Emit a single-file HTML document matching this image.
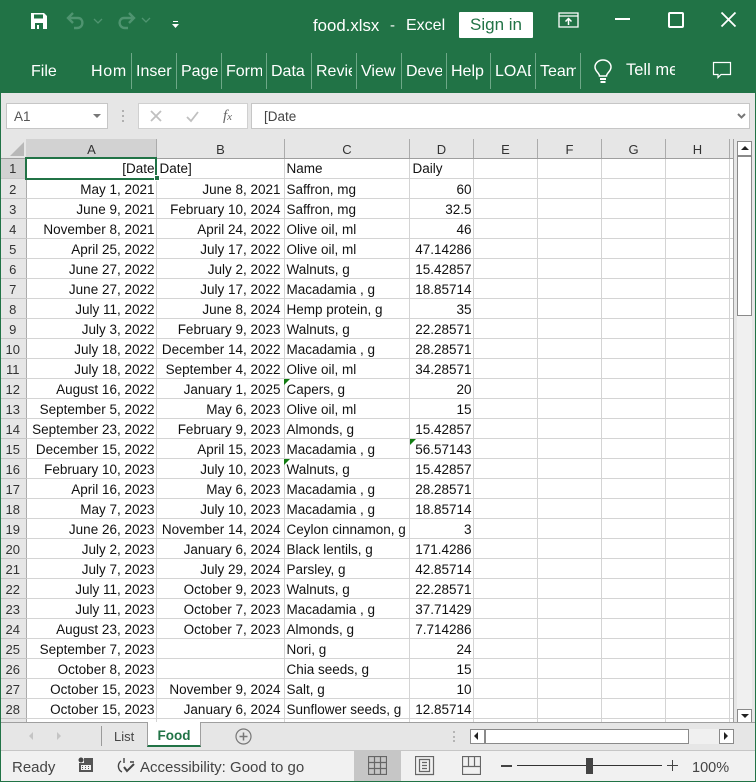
<!DOCTYPE html>
<html><head><meta charset="utf-8"><title>food.xlsx - Excel</title>
<style>
html,body{margin:0;padding:0}
body{width:756px;height:782px;position:relative;overflow:hidden;background:#e6e6e6;font-family:"Liberation Sans",sans-serif}
.a{position:absolute;white-space:nowrap}
.t{position:absolute;top:62px;color:#fff;font-size:16px;line-height:20px;overflow:hidden;white-space:nowrap;height:22px}
.s{position:absolute;top:53px;width:1px;height:36px;background:#6ea888}
.h{position:absolute;top:139px;height:19px;font-size:13px;line-height:21px;text-align:center;color:#333;border-right:1px solid #ababab;box-sizing:border-box}
table{position:absolute;left:0;top:158px;border-collapse:collapse;table-layout:fixed;width:733px;font-size:13.5px;color:#111;background:#fff}
td{height:17px;padding:2px 2px 0;border-right:1px solid #d4d4d4;border-bottom:1px solid #d4d4d4;white-space:nowrap;overflow:hidden;line-height:17px;box-sizing:content-box}
tr{height:20px}
td:first-child{background:#e6e6e6;border-right:1px solid #ababab;border-bottom:1px solid #c6c6c6;text-align:center;font-size:13px;color:#333;padding:2px 0 0}
td:nth-child(2),td:nth-child(3),td:nth-child(5){text-align:right}
td:nth-child(2),td:nth-child(5){padding-right:1px}
td:nth-child(3){padding-right:3px}
td:nth-child(3),td:nth-child(5){padding-left:3px}
.tri{position:absolute;width:0;height:0;border-top:6px solid #107c10;border-right:6px solid transparent}
</style></head><body>
<div class="a" style="left:0;top:0;width:756px;height:93px;background:#217346"></div>
<svg class="a" style="left:30px;top:12px" width="18" height="18" viewBox="0 0 18 18"><path d="M1 1h13l3 3v13H1z" fill="#fff"/><path d="M4 2.500h9v4H4z" fill="#217346"/><path d="M5 11h8v6H5z" fill="#217346"/><path d="M7 13h2v4H7z" fill="#fff"/></svg>
<svg class="a" style="left:65px;top:12px" width="90" height="20" viewBox="0 0 90 20" fill="none" stroke="#4f9470" stroke-width="2.400"><path d="M3 6h10c6 0 6 10-1 10H9M8 1L3 6l5 5"/><path d="M29 7l4 4 4-4" stroke-width="1.300"/><path d="M69 6H59c-6 0-6 10 1 10h3M64 1l5 5-5 5"/><path d="M77 6l4 4 4-4" stroke-width="1.300"/></svg>
<svg class="a" style="left:172px;top:21px" width="7" height="8" viewBox="0 0 7 8"><path d="M1 .5h5" stroke="#fff" fill="none"/><path d="M0 3h7L3.500 7z" fill="#fff"/></svg>
<div class="a" style="left:313px;top:16px;color:#fff;font-size:16.800px;line-height:20px">food.xlsx</div>
<div class="a" style="left:390px;top:16px;color:#fff;font-size:15px;line-height:20px">-</div>
<div class="a" style="left:406px;top:16px;color:#fff;font-size:16px;line-height:20px">Excel</div>
<div class="a" style="left:459px;top:12px;width:74px;height:26px;background:#fff;border-radius:1px;color:#217346;font-size:17px;line-height:26px;text-align:center">Sign in</div>
<svg class="a" style="left:558px;top:11px" width="22" height="18" viewBox="0 0 22 18" fill="none" stroke="#fff" stroke-width="1.300"><path d="M1 2h19v14H1zM1 5h19"/><path d="M10.500 14V8M7.500 10.500l3-3 3 3" stroke-width="1.500"/></svg>
<div class="a" style="left:615px;top:18px;width:15px;height:2px;background:#fff"></div>
<div class="a" style="left:668px;top:12px;width:12px;height:12px;border:2px solid #fff;border-radius:2px"></div>
<svg class="a" style="left:720px;top:11px" width="17" height="17" viewBox="0 0 17 17"><path d="M1.500 1.500l14 14M15.500 1.500l-14 14" stroke="#fff" stroke-width="1.800" fill="none"/></svg>

<div class="t" style="left:31px">File</div>
<div class="t" style="left:91px;width:36px;letter-spacing:.7px">Home</div>
<div class="t" style="left:136px;width:36px">Insert</div>
<div class="t" style="left:181px;width:37px">Page</div>
<div class="t" style="left:226px;width:36px">Formulas</div>
<div class="t" style="left:271px;width:36px">Data</div>
<div class="t" style="left:316px;width:36px">Review</div>
<div class="t" style="left:361px;width:36px">View</div>
<div class="t" style="left:406px;width:36px">Developer</div>
<div class="t" style="left:451px;width:36px">Help</div>
<div class="t" style="left:495px;width:36px">LOAD</div>
<div class="t" style="left:540px;width:36px">Team</div>
<div class="s" style="left:131px"></div><div class="s" style="left:176px"></div><div class="s" style="left:221px"></div><div class="s" style="left:266px"></div><div class="s" style="left:311px"></div><div class="s" style="left:356px"></div><div class="s" style="left:401px"></div><div class="s" style="left:446px"></div><div class="s" style="left:490px"></div><div class="s" style="left:535px"></div><div class="s" style="left:580px"></div>
<svg class="a" style="left:593px;top:59px" width="20" height="25" viewBox="0 0 20 25" fill="none" stroke="#fff" stroke-width="1.500"><path d="M6.500 17c0-3-4.500-4.500-4.500-9a8 7 0 0 1 16 0c0 4.500-4.500 6-4.500 9z"/><path d="M7 20h6M7.500 23h5" stroke-width="2"/></svg>
<div class="t" style="left:626px;top:60px;width:49px;font-size:16.500px">Tell me</div>
<svg class="a" style="left:712px;top:61px" width="20" height="18" viewBox="0 0 20 18" fill="none" stroke="#fff" stroke-width="1.200"><path d="M1.500 1.500h17v12H9l-3 3v-3H1.500z"/></svg>

<div class="a" style="left:6px;top:103px;width:100px;height:24px;background:#fff;border:1px solid #c6c6c6;font-size:13.500px;line-height:26px;color:#555;text-indent:7px">A1</div>
<div class="a" style="left:93px;top:114px;width:0;height:0;border:4px solid transparent;border-top:4px solid #777"></div>
<div class="a" style="left:122px;top:110px;width:2px;height:2px;background:#b0b0b0;box-shadow:0 5px #b0b0b0,0 10px #b0b0b0"></div>
<div class="a" style="left:138px;top:103px;width:108px;height:24px;background:#fff;border:1px solid #d0d0d0"></div>
<svg class="a" style="left:150px;top:110px" width="60" height="13" viewBox="0 0 60 13" fill="none" stroke="#c0c0c0" stroke-width="1.800"><path d="M1 1l10 10M11 1L1 11"/><path d="M37 7l4 4 7-9"/></svg>
<div class="a" style="left:223px;top:107px;font:italic 15px 'Liberation Serif',serif;color:#666;line-height:18px">f<span style="font-size:11px">x</span></div>
<div class="a" style="left:251px;top:103px;width:497px;height:24px;background:#fff;border:1px solid #c6c6c6;font-size:13.500px;line-height:26px;color:#444;text-indent:12px">[Date</div>
<svg class="a" style="left:737px;top:113px" width="9" height="7" viewBox="0 0 9 7"><path d="M1 1l3.500 3.500L8 1" fill="none" stroke="#777" stroke-width="2"/></svg>

<div class="a" style="left:26px;top:139px;width:131px;height:19px;background:#d2d2d2"></div>
<div class="h" style="left:27px;width:130px">A</div>
<div class="h" style="left:157px;width:128px">B</div>
<div class="h" style="left:285px;width:125px">C</div>
<div class="h" style="left:410px;width:64px">D</div>
<div class="h" style="left:474px;width:64px">E</div>
<div class="h" style="left:538px;width:64px">F</div>
<div class="h" style="left:602px;width:64px">G</div>
<div class="h" style="left:666px;width:64px">H</div>
<svg class="a" style="left:10px;top:142px" width="14" height="14"><path d="M14 0v14H0z" fill="#b8b8b8"/></svg>

<table><colgroup><col style="width:26px"><col style="width:130px"><col style="width:128px"><col style="width:125px"><col style="width:64px"><col style="width:64px"><col style="width:64px"><col style="width:64px"><col style="width:64px"><col style="width:4px"></colgroup>
<tr><td style="background:#d2d2d2">1</td><td>[Date</td><td style="text-align:left">Date]</td><td>Name</td><td style="text-align:left">Daily</td><td></td><td></td><td></td><td></td><td></td></tr>
<tr><td>2</td><td>May 1, 2021</td><td>June 8, 2021</td><td>Saffron, mg</td><td>60</td><td></td><td></td><td></td><td></td><td></td></tr>
<tr><td>3</td><td>June 9, 2021</td><td>February 10, 2024</td><td>Saffron, mg</td><td>32.5</td><td></td><td></td><td></td><td></td><td></td></tr>
<tr><td>4</td><td>November 8, 2021</td><td>April 24, 2022</td><td>Olive oil, ml</td><td>46</td><td></td><td></td><td></td><td></td><td></td></tr>
<tr><td>5</td><td>April 25, 2022</td><td>July 17, 2022</td><td>Olive oil, ml</td><td>47.14286</td><td></td><td></td><td></td><td></td><td></td></tr>
<tr><td>6</td><td>June 27, 2022</td><td>July 2, 2022</td><td>Walnuts, g</td><td>15.42857</td><td></td><td></td><td></td><td></td><td></td></tr>
<tr><td>7</td><td>June 27, 2022</td><td>July 17, 2022</td><td>Macadamia , g</td><td>18.85714</td><td></td><td></td><td></td><td></td><td></td></tr>
<tr><td>8</td><td>July 11, 2022</td><td>June 8, 2024</td><td>Hemp protein, g</td><td>35</td><td></td><td></td><td></td><td></td><td></td></tr>
<tr><td>9</td><td>July 3, 2022</td><td>February 9, 2023</td><td>Walnuts, g</td><td>22.28571</td><td></td><td></td><td></td><td></td><td></td></tr>
<tr><td>10</td><td>July 18, 2022</td><td>December 14, 2022</td><td>Macadamia , g</td><td>28.28571</td><td></td><td></td><td></td><td></td><td></td></tr>
<tr><td>11</td><td>July 18, 2022</td><td>September 4, 2022</td><td>Olive oil, ml</td><td>34.28571</td><td></td><td></td><td></td><td></td><td></td></tr>
<tr><td>12</td><td>August 16, 2022</td><td>January 1, 2025</td><td>Capers, g</td><td>20</td><td></td><td></td><td></td><td></td><td></td></tr>
<tr><td>13</td><td>September 5, 2022</td><td>May 6, 2023</td><td>Olive oil, ml</td><td>15</td><td></td><td></td><td></td><td></td><td></td></tr>
<tr><td>14</td><td>September 23, 2022</td><td>February 9, 2023</td><td>Almonds, g</td><td>15.42857</td><td></td><td></td><td></td><td></td><td></td></tr>
<tr><td>15</td><td>December 15, 2022</td><td>April 15, 2023</td><td>Macadamia , g</td><td>56.57143</td><td></td><td></td><td></td><td></td><td></td></tr>
<tr><td>16</td><td>February 10, 2023</td><td>July 10, 2023</td><td>Walnuts, g</td><td>15.42857</td><td></td><td></td><td></td><td></td><td></td></tr>
<tr><td>17</td><td>April 16, 2023</td><td>May 6, 2023</td><td>Macadamia , g</td><td>28.28571</td><td></td><td></td><td></td><td></td><td></td></tr>
<tr><td>18</td><td>May 7, 2023</td><td>July 10, 2023</td><td>Macadamia , g</td><td>18.85714</td><td></td><td></td><td></td><td></td><td></td></tr>
<tr><td>19</td><td>June 26, 2023</td><td>November 14, 2024</td><td>Ceylon cinnamon, g</td><td>3</td><td></td><td></td><td></td><td></td><td></td></tr>
<tr><td>20</td><td>July 2, 2023</td><td>January 6, 2024</td><td>Black lentils, g</td><td>171.4286</td><td></td><td></td><td></td><td></td><td></td></tr>
<tr><td>21</td><td>July 7, 2023</td><td>July 29, 2024</td><td>Parsley, g</td><td>42.85714</td><td></td><td></td><td></td><td></td><td></td></tr>
<tr><td>22</td><td>July 11, 2023</td><td>October 9, 2023</td><td>Walnuts, g</td><td>22.28571</td><td></td><td></td><td></td><td></td><td></td></tr>
<tr><td>23</td><td>July 11, 2023</td><td>October 7, 2023</td><td>Macadamia , g</td><td>37.71429</td><td></td><td></td><td></td><td></td><td></td></tr>
<tr><td>24</td><td>August 23, 2023</td><td>October 7, 2023</td><td>Almonds, g</td><td>7.714286</td><td></td><td></td><td></td><td></td><td></td></tr>
<tr><td>25</td><td>September 7, 2023</td><td></td><td>Nori, g</td><td>24</td><td></td><td></td><td></td><td></td><td></td></tr>
<tr><td>26</td><td>October 8, 2023</td><td></td><td>Chia seeds, g</td><td>15</td><td></td><td></td><td></td><td></td><td></td></tr>
<tr><td>27</td><td>October 15, 2023</td><td>November 9, 2024</td><td>Salt, g</td><td>10</td><td></td><td></td><td></td><td></td><td></td></tr>
<tr><td>28</td><td>October 15, 2023</td><td>January 6, 2024</td><td>Sunflower seeds, g</td><td>12.85714</td><td></td><td></td><td></td><td></td><td></td></tr>
<tr><td></td><td></td><td></td><td></td><td></td><td></td><td></td><td></td><td></td><td></td></tr>
</table>
<div class="a" style="left:0;top:158px;width:733px;height:1px;background:#9f9f9f"></div>
<div class="a" style="left:25px;top:157px;width:128px;height:19px;border:2px solid #217346;background:transparent"></div>
<div class="a" style="left:154px;top:175px;width:4px;height:4px;background:#217346;border:1px solid #fff"></div>
<div class="tri" style="left:284px;top:379px"></div>
<div class="tri" style="left:410px;top:439px"></div>
<div class="tri" style="left:284px;top:459px"></div>

<div class="a" style="left:733px;top:139px;width:2px;height:583px;background:#e6e6e6;border-left:1px solid #a0a0a0"></div>
<div class="a" style="left:737px;top:141px;width:15px;height:581px;background:#f0f0f0"></div>
<div class="a" style="left:737px;top:141px;width:13px;height:13px;background:#fff;border:1px solid #8a8a8a"></div>
<div class="a" style="left:741px;top:146px;width:0;height:0;border-left:4px solid transparent;border-right:4px solid transparent;border-bottom:4px solid #222"></div>
<div class="a" style="left:737px;top:156px;width:13px;height:158px;background:#fff;border:1px solid #8a8a8a"></div>
<div class="a" style="left:737px;top:709px;width:13px;height:12px;background:#fff;border:1px solid #8a8a8a"></div>
<div class="a" style="left:741px;top:714px;width:0;height:0;border-left:4px solid transparent;border-right:4px solid transparent;border-top:4px solid #222"></div>

<div class="a" style="left:0;top:722px;width:756px;height:29px;background:#e6e6e6;border-top:1px solid #9f9f9f;box-sizing:border-box"></div>
<div class="a" style="left:29px;top:732px;width:0;height:0;border:4px solid transparent;border-right:4px solid #c4c4c4;border-left:0"></div>
<div class="a" style="left:57px;top:732px;width:0;height:0;border:4px solid transparent;border-left:4px solid #c4c4c4;border-right:0"></div>
<div class="a" style="left:101px;top:726px;width:1px;height:20px;background:#9a9a9a"></div>
<div class="a" style="left:114px;top:727px;font-size:13px;line-height:19px;color:#444">List</div>
<div class="a" style="left:147px;top:722px;width:54px;height:25px;background:#fff;border-left:1px solid #9f9f9f;border-right:1px solid #9f9f9f;border-bottom:2px solid #217346;box-sizing:border-box;font-size:13.500px;font-weight:bold;color:#217346;line-height:27px;text-align:center">Food</div>
<svg class="a" style="left:235px;top:728px" width="17" height="17" viewBox="0 0 17 17" fill="none" stroke="#777"><circle cx="8.500" cy="8.500" r="7.500" stroke-width="1.200"/><path d="M8.500 4.500v8M4.500 8.500h8" stroke-width="1.500"/></svg>
<div class="a" style="left:453px;top:731px;width:2px;height:2px;background:#b5b5b5;box-shadow:0 5px #b5b5b5,0 9px #b5b5b5"></div>
<div class="a" style="left:470px;top:729px;width:263px;height:15px;background:#f0f0f0"></div>
<div class="a" style="left:470px;top:729px;width:13px;height:13px;background:#fff;border:1px solid #8a8a8a"></div>
<div class="a" style="left:474px;top:732px;width:0;height:0;border:4px solid transparent;border-right:4px solid #222;border-left:0"></div>
<div class="a" style="left:485px;top:729px;width:202px;height:13px;background:#fff;border:1px solid #8a8a8a"></div>
<div class="a" style="left:719px;top:729px;width:13px;height:13px;background:#fff;border:1px solid #8a8a8a"></div>
<div class="a" style="left:724px;top:732px;width:0;height:0;border:4px solid transparent;border-left:4px solid #222;border-right:0"></div>

<div class="a" style="left:0;top:750px;width:756px;height:31px;background:#f1f1f1;border-top:1px solid #c6c6c6;box-sizing:border-box"></div>
<div class="a" style="left:12px;top:758px;font-size:15px;line-height:20px;color:#444">Ready</div>
<svg class="a" style="left:78px;top:757px" width="16" height="16" viewBox="0 0 16 16"><circle cx="3" cy="3" r="2.500" fill="#444"/><path d="M6 1h9v14H1V6h5z" fill="#555"/><path d="M3 8h10v5H3z" fill="#f1f1f1"/><path d="M4 9h1v1H4zM7 9h1v1H7zM10 9h1v1h-1zM4 11h1v1H4zM7 11h1v1H7zM10 11h1v1h-1z" fill="#555"/></svg>
<svg class="a" style="left:116px;top:757px" width="20" height="18" viewBox="0 0 20 18" fill="none" stroke="#444" stroke-width="1.400"><path d="M5 4a6.500 6.500 0 0 0 1 11M8 1v5M14 5h4"/><path d="M8 10l3 4 7-7" stroke-width="2"/></svg>
<div class="a" style="left:140px;top:758px;font-size:15px;line-height:20px;color:#444">Accessibility: Good to go</div>
<div class="a" style="left:354px;top:751px;width:47px;height:30px;background:#c6c6c6"></div>
<svg class="a" style="left:368px;top:756px" width="19" height="19" viewBox="0 0 19 19" fill="none" stroke="#666" stroke-width="1.200"><path d="M.5.500h18v18H.500zM6.500.500v18M12.500.500v18M.5 6.500h18M.5 12.500h18"/></svg>
<svg class="a" style="left:415px;top:756px" width="20" height="20" viewBox="0 0 20 20" fill="none" stroke="#666" stroke-width="1.200"><path d="M.5.500h18v18H.500z"/><path d="M4.500 3.500h10v12h-10zM7 6.500h5M7 9.500h5M7 12.500h5"/></svg>
<svg class="a" style="left:462px;top:756px" width="19" height="19" viewBox="0 0 19 19" fill="none" stroke="#666" stroke-width="1.200"><path d="M.5.500h18v18H.500zM.5 10.500h18M6.500.500v10M12.500.500v10"/></svg>
<div class="a" style="left:501px;top:765px;width:11px;height:2px;background:#444"></div>
<div class="a" style="left:517px;top:765px;width:145px;height:1px;background:#333"></div>
<div class="a" style="left:586px;top:758px;width:7px;height:16px;background:#444"></div>
<div class="a" style="left:667px;top:765px;width:11px;height:1px;background:#444"></div>
<div class="a" style="left:672px;top:760px;width:1px;height:11px;background:#444"></div>
<div class="a" style="left:692px;top:758px;font-size:14.500px;line-height:20px;color:#444">100%</div>

<div class="a" style="left:0;top:93px;width:1px;height:689px;background:#217346"></div>
<div class="a" style="left:755px;top:93px;width:1px;height:689px;background:#217346"></div>
<div class="a" style="left:0;top:781px;width:756px;height:1px;background:#217346"></div>
</body></html>
